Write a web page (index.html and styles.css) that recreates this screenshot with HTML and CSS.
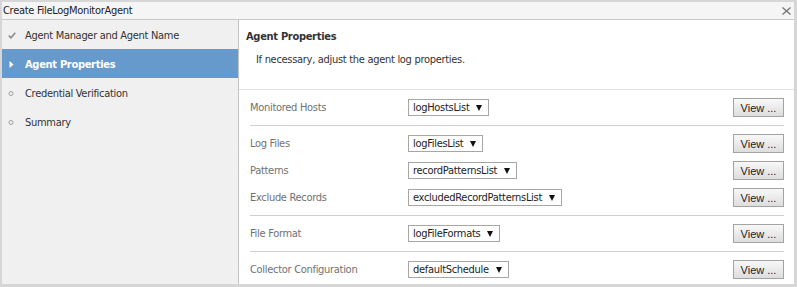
FILE: index.html
```html
<!DOCTYPE html>
<html lang="en">
<head>
    <meta charset="UTF-8">
    <meta name="viewport" content="width=device-width, initial-scale=1.0">
    <title>Create FileLogMonitorAgent</title>
    <link rel="stylesheet" href="styles.css">
</head>
<body>

    <div class="dialog">
        <div class="titlebar">
            <span class="title">Create FileLogMonitorAgent</span>
            <svg class="close" width="9" height="8" viewBox="0 0 9 8">
                <path d="M0.5 0.5 L8.5 7.5 M8.5 0.5 L0.5 7.5" stroke="#7a7a7a" stroke-width="1.4" fill="none"/>
            </svg>
        </div>

        <div class="main">
            <ul class="steps">
                <li class="step done">
                    <svg class="step-icon" width="8" height="7" viewBox="0 0 8 7">
                        <path d="M0.8 3.6 L3 5.8 L7.3 0.8" stroke="#8c8c8c" stroke-width="1.6" fill="none"/>
                    </svg>
                    Agent Manager and Agent Name
                </li>
                <li class="step current">
                    <svg class="step-icon" width="8" height="7" viewBox="0 0 8 7">
                        <path d="M1.5 0 L5.5 3.5 L1.5 7 Z" fill="#fff"/>
                    </svg>
                    Agent Properties
                </li>
                <li class="step">
                    <svg class="step-icon" width="8" height="7" viewBox="0 0 8 7">
                        <circle cx="3" cy="3.5" r="2" stroke="#a0a0a0" stroke-width="1" fill="none"/>
                    </svg>
                    Credential Verification
                </li>
                <li class="step">
                    <svg class="step-icon" width="8" height="7" viewBox="0 0 8 7">
                        <circle cx="3" cy="3.5" r="2" stroke="#a0a0a0" stroke-width="1" fill="none"/>
                    </svg>
                    Summary
                </li>
            </ul>

            <div class="content">
                <div class="intro">
                    <h2>Agent Properties</h2>
                    <p>If necessary, adjust the agent log properties.</p>
                </div>

                <div class="group">
                    <div class="row">
                        <span class="label">Monitored Hosts</span>
                        <span class="select">logHostsList <i class="arrow"></i></span>
                        <button class="view">View ...</button>
                    </div>
                </div>

                <div class="group">
                    <div class="row">
                        <span class="label">Log Files</span>
                        <span class="select">logFilesList <i class="arrow"></i></span>
                        <button class="view">View ...</button>
                    </div>
                    <div class="row">
                        <span class="label">Patterns</span>
                        <span class="select">recordPatternsList <i class="arrow"></i></span>
                        <button class="view">View ...</button>
                    </div>
                    <div class="row">
                        <span class="label">Exclude Records</span>
                        <span class="select">excludedRecordPatternsList <i class="arrow"></i></span>
                        <button class="view">View ...</button>
                    </div>
                </div>

                <div class="group">
                    <div class="row">
                        <span class="label">File Format</span>
                        <span class="select">logFileFormats <i class="arrow"></i></span>
                        <button class="view">View ...</button>
                    </div>
                </div>

                <div class="group">
                    <div class="row">
                        <span class="label">Collector Configuration</span>
                        <span class="select">defaultSchedule <i class="arrow"></i></span>
                        <button class="view">View ...</button>
                    </div>
                </div>
            </div>
        </div>
    </div>

</body>
</html>
```

FILE: styles.css
```css
html, body {
    height: 100%;
    margin: 0;
    padding: 0;
    overflow: hidden;
}

body {
    font-family: 'DejaVu Sans Condensed', 'DejaVu Sans', sans-serif;
    font-size: 11px;
    letter-spacing: -0.3px;
    background: #d6d6d6;
    color: #333;
    padding: 2px 3px 3px 2px;
    box-sizing: border-box;
}

.dialog {
    height: 100%;
    display: flex;
    flex-direction: column;
    background: #fff;
}

.titlebar {
    height: 17px;
    display: flex;
    align-items: center;
    justify-content: space-between;
    background: #f5f5f5;
    border-bottom: 1px solid #c9c9c9;
    padding: 0 3px 0 1px;
    color: #222;
}

.close {
    margin-top: 1px;
}

.main {
    flex: 1;
    display: flex;
    min-height: 0;
}

.steps {
    width: 236px;
    margin: 0;
    padding: 0;
    list-style: none;
    background: #f0f0f0;
    border-right: 1px solid #c4c4c4;
}

.step {
    height: 29px;
    box-sizing: border-box;
    display: flex;
    align-items: center;
    padding: 2px 0 0 6px;
    color: #333;
}

.step-icon {
    margin: -1px 9px 0 0;
}

.step.current {
    background: #6699cc;
    color: #fff;
    font-weight: bold;
}

.content {
    flex: 1;
    overflow: hidden;
}

.intro {
    height: 70px;
    box-sizing: border-box;
    padding: 10px 0 0 7px;
    border-bottom: 1px solid #e2e2e2;
}

.intro h2 {
    margin: 0;
    font-size: 11px;
    line-height: 14px;
    color: #333;
}

.intro p {
    margin: 9px 0 0 10px;
    line-height: 14px;
    color: #333;
}

.group {
    display: flex;
    flex-direction: column;
    gap: 8px;
    margin: 0 10px 0 11px;
    padding: 8px 0;
    border-bottom: 1px solid #cfcfcf;
}

.group:last-child {
    border-bottom: none;
}

.row {
    height: 19px;
    display: flex;
    align-items: center;
}

.label {
    width: 158px;
    color: #717171;
}

.select {
    height: 17px;
    box-sizing: border-box;
    display: flex;
    align-items: center;
    gap: 7px;
    padding: 0 6px 0 4px;
    border: 1px solid #a6a6a6;
    background: #fff;
    color: #222;
}

.arrow {
    width: 0;
    height: 0;
    border-left: 3.5px solid transparent;
    border-right: 3.5px solid transparent;
    border-top: 6px solid #111;
}

.view {
    margin-left: auto;
    width: 51px;
    height: 19px;
    padding: 0;
    border: 1px solid #a3a3a3;
    background: linear-gradient(#f8f8f8, #dddddd);
    font-family: 'Liberation Sans', Arial, sans-serif;
    font-size: 11px;
    letter-spacing: 0;
    color: #222;
}
```
